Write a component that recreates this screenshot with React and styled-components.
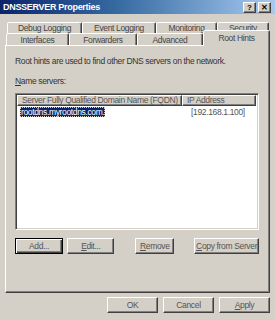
import styled, { createGlobalStyle } from "styled-components";

const Global = createGlobalStyle`
  html, body {
    margin: 0;
    padding: 0;
    background: #d4d0c8;
  }
  body {
    font-family: "Liberation Sans", Arial, sans-serif;
    font-size: 8.5px;
    letter-spacing: -0.35px;
    line-height: 10px;
    color: #2a2a2a;
  }
`;

const rowOne = [
  { label: "Debug Logging", width: 75 },
  { label: "Event Logging", width: 74 },
  { label: "Monitoring", width: 61 },
  { label: "Security", width: 52 },
];

const rowTwo = [
  { label: "Interfaces", width: 63 },
  { label: "Forwarders", width: 68 },
  { label: "Advanced", width: 66 },
  { label: "Root Hints", width: 67, active: true },
];

const App = () => {
  return (
    <>
      <Global />
      <Window>
        <TitleBar>
          <Title>DNSSERVER Properties</Title>
          <Controls>
            <CaptionButton>?</CaptionButton>
            <CaptionButton>✕</CaptionButton>
          </Controls>
        </TitleBar>

        <Body>
          <TabRow $inset={2} $h={11}>
            {rowOne.map((t) => (
              <Tab key={t.label} $w={t.width} $h={11}>{t.label}</Tab>
            ))}
          </TabRow>
          <TabRow $inset={1} $h={12} $front>
            {rowTwo.map((t) => (
              <Tab key={t.label} $w={t.width} $h={12} $active={t.active}>{t.label}</Tab>
            ))}
          </TabRow>

          <Panel>
            <Intro>Root hints are used to find other DNS servers on the network.</Intro>
            <Label><u>N</u>ame servers:</Label>
            <ListBox>
              <HeaderRow>
                <HeaderCell $w={167}>Server Fully Qualified Domain Name (FQDN)</HeaderCell>
                <HeaderCell $w={75}>IP Address</HeaderCell>
              </HeaderRow>
              <ItemRow>
                <NameCell>
                  <Selected>rootdns.myrootdns.com.</Selected>
                </NameCell>
                <IpCell>[192.168.1.100]</IpCell>
              </ItemRow>
            </ListBox>
            <ButtonRow>
              <Button $w={52} $default>Add...</Button>
              <Button $w={51}><u>E</u>dit...</Button>
              <Spacer $w={14} />
              <Button $w={42}><u>R</u>emove</Button>
              <Spacer $w={13} />
              <Button $w={70}><u>C</u>opy from Server</Button>
            </ButtonRow>
          </Panel>

          <Footer>
            <Button $w={51}>OK</Button>
            <Button $w={51}>Cancel</Button>
            <Button $w={51}><u>A</u>pply</Button>
          </Footer>
        </Body>
      </Window>
    </>
  );
};

const Window = styled.div`
  width: 275px;
  height: 320px;
  background: #d4d0c8;
  display: flex;
  flex-direction: column;
  overflow: hidden;
`;

const TitleBar = styled.div`
  height: 14px;
  display: flex;
  align-items: center;
  justify-content: space-between;
  padding: 0 4px 0 3px;
  background: linear-gradient(to right, #0a246a 0%, #3a6ea5 45%, #a6caf0 100%);
`;

const Title = styled.span`
  color: #fff;
  font-weight: bold;
  font-size: 9px;
  letter-spacing: -0.3px;
`;

const Controls = styled.div`
  display: flex;
  gap: 2px;
`;

const CaptionButton = styled.span`
  width: 11px;
  height: 9px;
  background: #d4d0c8;
  border: 1px solid;
  border-color: #fff #404040 #404040 #fff;
  box-shadow: inset -1px -1px 0 #808080;
  font-size: 8px;
  font-weight: bold;
  line-height: 9px;
  letter-spacing: 0;
  text-align: center;
  color: #000;
`;

const Body = styled.div`
  padding: 8px 5px 0 5px;
  display: flex;
  flex-direction: column;
`;

const TabRow = styled.div`
  display: flex;
  height: ${(p) => p.$h}px;
  padding-left: ${(p) => p.$inset}px;
  position: relative;
  z-index: ${(p) => (p.$front ? 2 : 1)};
`;

const Tab = styled.div`
  width: ${(p) => p.$w}px;
  box-sizing: border-box;
  height: ${(p) => (p.$active ? p.$h + 4 : p.$h)}px;
  margin-top: ${(p) => (p.$active ? -3 : 0)}px;
  background: #d4d0c8;
  border: 1px solid;
  border-bottom: none;
  border-color: #fff #404040 transparent #fff;
  box-shadow: inset -1px 0 0 #808080;
  border-radius: 2px 2px 0 0;
  padding-top: ${(p) => (p.$active ? 2 : p.$h - 11)}px;
  text-align: center;
  line-height: 10px;
  white-space: nowrap;
  color: #444;
  position: relative;
  z-index: ${(p) => (p.$active ? 3 : 1)};
`;

const Panel = styled.div`
  height: 248px;
  box-sizing: border-box;
  border: 1px solid;
  border-color: #fff #404040 #404040 #fff;
  box-shadow: inset -1px -1px 0 #808080;
  padding: 10px 10px 0 9px;
  display: flex;
  flex-direction: column;
`;

const Intro = styled.div`
  white-space: nowrap;
  color: #333;
`;

const Label = styled.div`
  margin-top: 10px;
  color: #333;
`;

const ListBox = styled.div`
  margin-top: 7px;
  height: 137px;
  box-sizing: border-box;
  background: #fff;
  border: 1px solid;
  border-color: #808080 #fff #fff #808080;
  box-shadow: inset 1px 1px 0 #404040, inset -1px -1px 0 #d4d0c8;
  padding: 1px 2px 0 1px;
`;

const HeaderRow = styled.div`
  display: flex;
  height: 11px;
`;

const HeaderCell = styled.div`
  width: ${(p) => p.$w}px;
  box-sizing: border-box;
  background: #d4d0c8;
  border: 1px solid;
  border-color: #fff #404040 #404040 #fff;
  box-shadow: inset -1px -1px 0 #808080;
  padding-left: 4px;
  line-height: 9px;
  white-space: nowrap;
  overflow: hidden;
  color: #555;
`;

const ItemRow = styled.div`
  display: flex;
  height: 11px;
  align-items: center;
`;

const NameCell = styled.div`
  width: 167px;
  padding-left: 3px;
`;

const Selected = styled.span`
  background: #0a246a;
  color: #fff;
  padding: 0 1px;
  outline: 1px dotted #d4d0c8;
  outline-offset: -1px;
`;

const IpCell = styled.div`
  padding-left: 4px;
  color: #555;
`;

const ButtonRow = styled.div`
  display: flex;
  margin-top: 8px;
  gap: 4px;
`;

const Spacer = styled.div`
  width: ${(p) => p.$w}px;
`;

const Button = styled.div`
  width: ${(p) => p.$w}px;
  height: 16px;
  box-sizing: border-box;
  background: #d4d0c8;
  border: 1px solid;
  border-color: ${(p) => (p.$default ? "#000" : "#fff #404040 #404040 #fff")};
  box-shadow: ${(p) =>
    p.$default
      ? "inset 1px 1px 0 #fff, inset -1px -1px 0 #404040, inset -2px -2px 0 #808080"
      : "inset -1px -1px 0 #808080"};
  display: flex;
  align-items: center;
  justify-content: center;
  color: #555;
  white-space: nowrap;
`;

const Footer = styled.div`
  display: flex;
  justify-content: flex-end;
  gap: 5px;
  margin-top: 4px;
`;

export default App;
